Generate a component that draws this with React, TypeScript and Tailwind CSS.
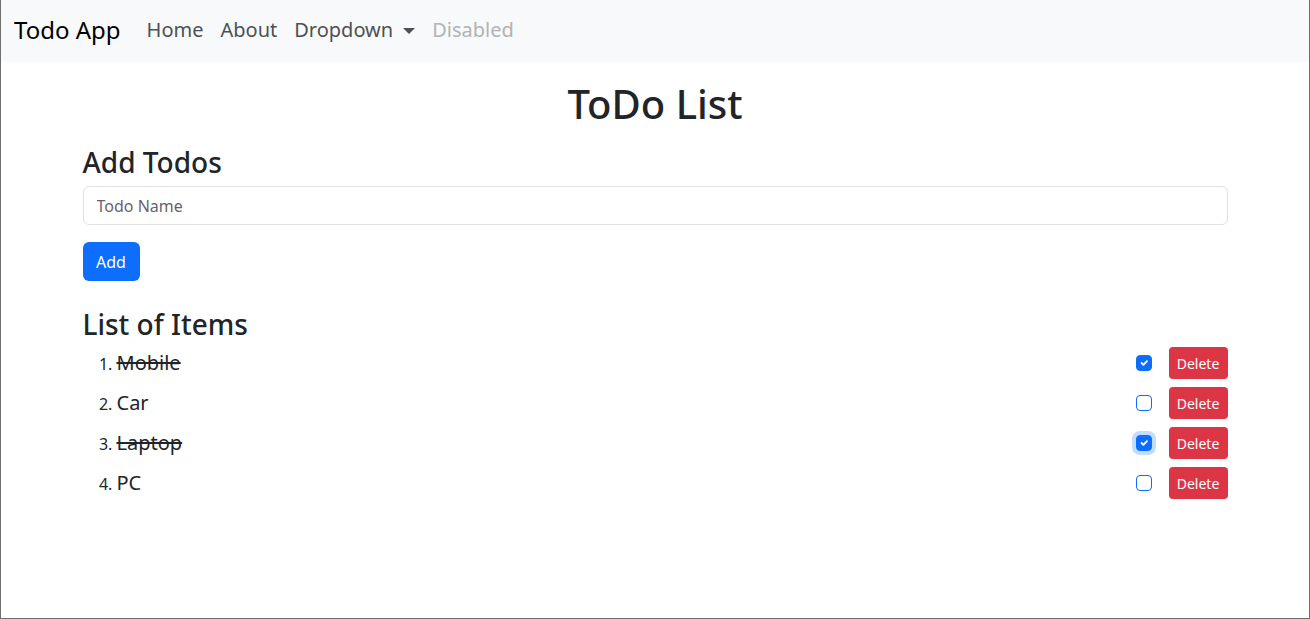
import { useState } from "react";

type Todo = { name: string; done: boolean };

const initial: Todo[] = [
  { name: "Mobile", done: true },
  { name: "Car", done: false },
  { name: "Laptop", done: true },
  { name: "PC", done: false },
];

function Check({ checked, focus }: { checked: boolean; focus?: boolean }) {
  return (
    <span
      className={
        "grid h-4 w-4 place-items-center rounded-[4px] border " +
        (checked ? "border-[#0d6efd] bg-[#0d6efd] " : "border-[#0d6efd] bg-white ") +
        (focus ? "shadow-[0_0_0_4px_#c2dbfe]" : "")
      }
    >
      {checked && (
        <svg viewBox="0 0 20 20" className="h-3 w-3">
          <path d="M6 10l3 3l6-6" fill="none" stroke="#fff" strokeWidth="3" strokeLinecap="round" strokeLinejoin="round" />
        </svg>
      )}
    </span>
  );
}

export default function App() {
  const [todos] = useState(initial);
  return (
    <div className="min-h-[619px] border-x border-b border-[#6f6f6f] bg-white text-[#212529] font-['Noto_Sans',sans-serif]">
      <nav className="flex h-[62px] items-center bg-[#f8f9fa] px-[13px] pb-[2px]">
        <span className="mr-[26px] text-[24px] text-black">Todo App</span>
        <div className="flex items-center gap-[17px] text-[20px] text-[#4d5154]">
          <span>Home</span>
          <span>About</span>
          <span className="flex items-center gap-[10px]">
            Dropdown
            <span className="mt-[2px] h-0 w-0 border-x-[6px] border-t-[6px] border-x-transparent border-t-[#4d5154]" />
          </span>
          <span className="text-[#b3b3b3]">Disabled</span>
        </div>
      </nav>
      <main className="mx-auto w-[1145px]">
        <h1 className="mt-[18px] text-center text-[40px] font-medium leading-[48px]">ToDo List</h1>
        <h2 className="mt-[16px] text-[28px] font-medium leading-[36px]">Add Todos</h2>
        <input
          className="mt-[6px] block h-[39px] w-full rounded-[6px] border border-[#dee2e6] px-[13px] text-[16px] placeholder:text-[#6b5f6e] outline-none"
          placeholder="Todo Name"
        />
        <button className="mt-[17px] h-[39px] w-[57px] rounded-[6px] bg-[#0d6efd] text-[16px] text-white">Add</button>
        <h2 className="mt-[25px] text-[28px] font-medium leading-[36px]">List of Items</h2>
        <ol className="mt-[1px] list-decimal pl-[34px] text-[20px]">
          {todos.map((t, i) => (
            <li key={t.name} className="h-[40px] marker:text-[16px]">
              <div className="flex h-[40px] items-center justify-between">
                <span className={t.done ? "line-through" : ""}>{t.name}</span>
                <span className="flex items-center gap-[17px]">
                  <Check checked={t.done} focus={i === 2} />
                  <button className="h-[32px] w-[59px] rounded-[4px] bg-[#dc3545] text-[14px] text-white">Delete</button>
                </span>
              </div>
            </li>
          ))}
        </ol>
      </main>
    </div>
  );
}
